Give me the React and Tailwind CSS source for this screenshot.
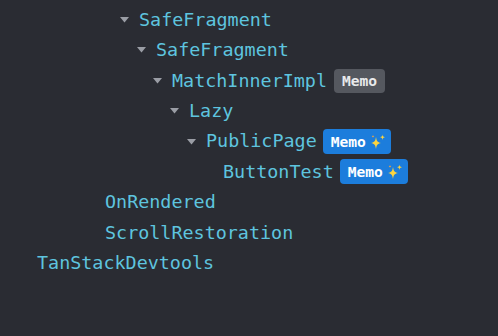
import React from 'react';

const rows = [
  { label: 'SafeFragment', pad: 'pl-[103px]', toggle: true },
  { label: 'SafeFragment', pad: 'pl-[120px]', toggle: true },
  { label: 'SafeFragment', pad: 'pl-[137px]', toggle: true },
  { label: 'MatchInnerImpl', pad: 'pl-[153px]', toggle: true, badge: 'gray' },
  { label: 'Lazy', pad: 'pl-[170px]', toggle: true },
  { label: 'PublicPage', pad: 'pl-[187px]', toggle: true, badge: 'blue' },
  { label: 'ButtonTest', pad: 'pl-[204px]', toggle: false, badge: 'blue' },
  { label: 'OnRendered', pad: 'pl-[86px]', toggle: false },
  { label: 'ScrollRestoration', pad: 'pl-[86px]', toggle: false },
  { label: 'TanStackDevtools', pad: 'pl-[18px]', toggle: false },
];

function Sparkles() {
  return (
    <svg width="16" height="16" viewBox="0 0 16 16" className="ml-[4px]">
      <path d="M6 3 C6.6 7 7.4 8.2 11 9 C7.4 9.8 6.6 11 6 15 C5.4 11 4.6 9.8 1 9 C4.6 8.2 5.4 7 6 3Z" fill="#fcd43f" />
      <path d="M12.5 0.5 C12.8 2.4 13.2 2.8 15 3.2 C13.2 3.6 12.8 4 12.5 6 C12.2 4 11.8 3.6 10 3.2 C11.8 2.8 12.2 2.4 12.5 0.5Z" fill="#fcd43f" />
      <path d="M3 1 C3.2 2 3.4 2.2 4.3 2.4 C3.4 2.6 3.2 2.8 3 3.8 C2.8 2.8 2.6 2.6 1.7 2.4 C2.6 2.2 2.8 2 3 1Z" fill="#f7a63b" />
    </svg>
  );
}

function Badge({ kind }) {
  if (kind === 'gray') {
    return (
      <span className="ml-[7px] flex h-[24px] items-center rounded-[4px] bg-[#55585f] px-[8px] text-[14.6px] font-bold text-[#e8e9eb]">
        Memo
      </span>
    );
  }
  return (
    <span className="ml-[6px] flex h-[25px] items-center rounded-[4px] bg-[#1c7ddc] pl-[8px] pr-[5px] text-[14.6px] font-bold text-white">
      Memo
      <Sparkles />
    </span>
  );
}

export default function App() {
  return (
    <div className="h-[336px] w-[498px] overflow-hidden bg-[#2a2c33] font-['DejaVu_Sans_Mono',monospace] text-[18.4px] text-[#5ec4df]">
      <div className="-mt-[25.6px] flex flex-col">
        {rows.map((r, i) => (
          <div key={i} className={`flex h-[30.4px] items-center ${r.pad}`}>
            <span className="flex w-[19px] shrink-0 items-center">
              {r.toggle && (
                <svg width="9" height="6" viewBox="0 0 9 6">
                  <path d="M0 0 H9 L4.5 5.5Z" fill="#9a9da5" />
                </svg>
              )}
            </span>
            <span className="leading-none">{r.label}</span>
            {r.badge && <Badge kind={r.badge} />}
          </div>
        ))}
      </div>
    </div>
  );
}
